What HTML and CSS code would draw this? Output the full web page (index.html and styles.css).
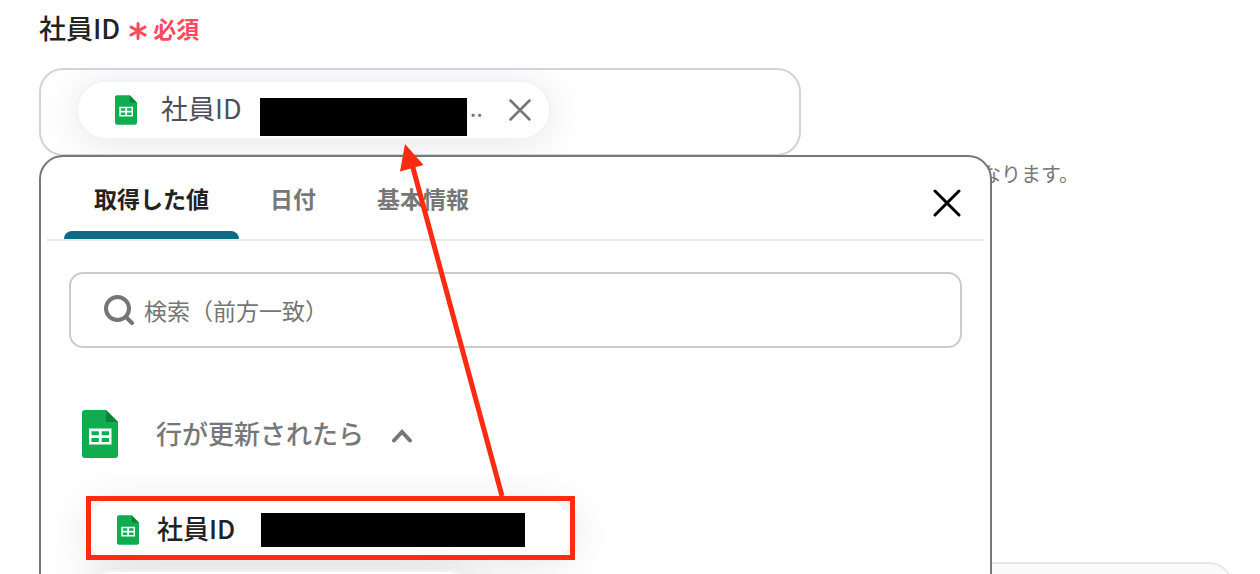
FILE: index.html
```html
<!DOCTYPE html>
<html lang="ja">
<head>
<meta charset="utf-8">
<meta name="viewport" content="width=device-width, initial-scale=1">
<title>社員ID</title>
<link rel="stylesheet" href="styles.css">
</head>
<body>
<svg class="defs" width="0" height="0" aria-hidden="true">
  <symbol id="sheet" viewBox="0 0 36 48">
    <path fill="#0fad4f" d="M3 0h21l12 12v33a3 3 0 0 1-3 3H3a3 3 0 0 1-3-3V3a3 3 0 0 1 3-3z"/>
    <path fill="#098437" d="M24 0l12 12H24z"/>
    <path fill="#fff" fill-rule="evenodd" d="M7 18.500h22.500v16H7zM9.500 21.200v4h7.300v-4zM19.700 21.200v4H27v-4zM9.500 28v4h7.300v-4zM19.700 28v4H27v-4z"/>
  </symbol>
</svg>
<main class="page">
  <section class="field">
    <h2 class="field-title">社員ID
      <span class="required">
        <svg class="asterisk" viewBox="0 0 18 18" aria-hidden="true"><path d="M9 1.500v15M2 5l14 8M16 5L2 13"/></svg>必須
      </span>
    </h2>
    <div class="value-area">
      <div class="value-box">
        <div class="chip">
          <svg class="sheet-small" aria-hidden="true"><use href="#sheet"/></svg>
          <span class="chip-label">社員ID</span>
          <span class="mask"></span>
          <span class="dots">..</span>
          <button class="chip-remove" type="button" aria-label="削除">
            <svg viewBox="0 0 22 22" aria-hidden="true"><path d="M1.500 1.500l19 19M20.500 1.500l-19 19"/></svg>
          </button>
        </div>
      </div>
      <div class="picker">
        <div class="tabs" role="tablist">
          <button class="tab active" type="button" role="tab" aria-selected="true">取得した値</button>
          <button class="tab" type="button" role="tab" aria-selected="false">日付</button>
          <button class="tab" type="button" role="tab" aria-selected="false">基本情報</button>
          <button class="close" type="button" aria-label="閉じる">
            <svg viewBox="0 0 28 28" aria-hidden="true"><path d="M2 2l24 24M26 2L2 26"/></svg>
          </button>
        </div>
        <label class="search">
          <svg viewBox="0 0 30 30" aria-hidden="true"><circle cx="13.500" cy="13.500" r="11.500"/><path d="M22 22l6 6"/></svg>
          <input type="text" placeholder="検索（前方一致）" aria-label="検索（前方一致）">
        </label>
        <button class="group" type="button" aria-expanded="true">
          <svg class="sheet-large" aria-hidden="true"><use href="#sheet"/></svg>
          <span class="group-label">行が更新されたら</span>
          <svg class="chevron" viewBox="0 0 20 14" aria-hidden="true"><path d="M2 11.500l8-8.500 8 8.500"/></svg>
        </button>
        <div class="options">
          <button class="option" type="button">
            <svg class="sheet-small" aria-hidden="true"><use href="#sheet"/></svg>
            <span class="option-label">社員ID</span>
            <span class="option-mask"></span>
          </button>
          <button class="option next" type="button" aria-label="次の項目"></button>
        </div>
      </div>
    </div>
    <p class="hint">なります。</p>
  </section>
  <section class="card"></section>
  <div class="highlight"></div>
  <svg class="arrow" viewBox="0 0 106 352" aria-hidden="true">
    <path class="shaft" d="M12.500 22L102 352"/>
    <path class="head" d="M5 0L23.500 21L0 27.500z"/>
  </svg>
</main>
</body>
</html>
```
FILE: styles.css
```css
* { box-sizing: border-box; }
body {
  margin: 0;
  background: #fff;
  color: #222;
  font-family: "Noto Sans CJK JP", "Noto Sans", sans-serif;
}
button {
  margin: 0;
  padding: 0;
  border: 0;
  background: none;
  color: inherit;
  font: inherit;
  cursor: pointer;
}
svg { display: block; flex: none; }
path, circle { stroke-linecap: round; }
.defs { position: absolute; }
.page {
  position: relative;
  height: 100vh;
  overflow: hidden;
}
.field { padding: 8px 39px 0; }
.field-title {
  display: flex;
  align-items: center;
  gap: 9px;
  margin: 0 0 20px;
  font-size: 27px;
  font-weight: 500;
  line-height: 40px;
}
.required {
  display: flex;
  align-items: center;
  gap: 6px;
  color: #ff4a5d;
  font-size: 23px;
  font-weight: 700;
  line-height: 36px;
}
.asterisk {
  width: 18px;
  height: 18px;
  margin-top: 6px;
  fill: none;
  stroke: currentColor;
  stroke-width: 3;
}
.value-area { position: relative; }
.value-box {
  max-width: 762px;
  padding: 10px 35px 14px;
  border: 2px solid #cfd4da;
  border-radius: 24px;
  overflow: hidden;
}
.chip {
  display: flex;
  align-items: center;
  width: 475px;
  height: 60px;
  padding: 0 18px 0 37px;
  border: 2px solid #f3f3f3;
  border-radius: 30px;
  background: #fff;
  box-shadow: 0 4px 44px rgba(0, 0, 0, .1);
}
.sheet-small { width: 22px; height: 30px; }
.chip-label {
  margin-left: 24px;
  padding-bottom: 4px;
  color: #4b515b;
  font-size: 27px;
  line-height: 40px;
}
.mask {
  align-self: flex-end;
  width: 207px;
  height: 38px;
  margin: 0 3px 2px auto;
  background: #000;
}
.dots {
  padding-bottom: 6px;
  color: #757575;
  font-size: 24px;
  line-height: 32px;
}
.chip-remove { margin-left: 26px; }
.chip-remove svg {
  width: 22px;
  height: 22px;
  fill: none;
  stroke: #757575;
  stroke-width: 2.5;
}
.picker {
  position: absolute;
  z-index: 1;
  top: 87px;
  left: 0;
  width: 953px;
  height: 100vh;
  border: 2px solid #777;
  border-radius: 24px;
  background: #fff;
  overflow: hidden;
}
.tabs {
  display: flex;
  align-items: stretch;
  gap: 1px;
  height: 84px;
  margin: 0 6px;
  padding-left: 17px;
  border-bottom: 2px solid #e6e6e6;
}
.tab {
  position: relative;
  padding: 0 30px;
  color: #777;
  font-size: 23px;
  font-weight: 700;
  line-height: 34px;
}
.tab.active { color: #222; }
.tab.active::after {
  content: "";
  position: absolute;
  right: 0;
  bottom: 0;
  left: 0;
  height: 8px;
  border-radius: 8px 8px 0 0;
  background: #0c6b84;
}
.close { margin: 10px 23px 0 auto; }
.close svg {
  width: 28px;
  height: 28px;
  fill: none;
  stroke: #000;
  stroke-width: 3;
}
.search {
  display: flex;
  align-items: center;
  gap: 10px;
  height: 76px;
  margin: 31px 28px 0;
  padding: 0 33px;
  border: 2px solid #ccc;
  border-radius: 14px;
  color: #757575;
}
.search svg {
  width: 30px;
  height: 30px;
  fill: none;
  stroke: currentColor;
  stroke-width: 4;
}
.search input {
  flex: 1;
  min-width: 0;
  padding: 0;
  border: 0;
  outline: 0;
  background: none;
  color: #222;
  font-family: inherit;
  font-size: 23px;
  line-height: 34px;
}
.search input::placeholder { color: #757575; opacity: 1; }
.group {
  display: flex;
  align-items: center;
  margin: 62px 0 0 41px;
  color: #777;
  font-size: 26px;
  font-weight: 500;
  line-height: 40px;
}
.group-label { padding-bottom: 2px; }
.sheet-large { width: 36px; height: 48px; margin-right: 38px; }
.chevron {
  width: 20px;
  height: 14px;
  margin: 4px 0 0 28px;
  fill: none;
  stroke: currentColor;
  stroke-width: 4;
}
.options {
  display: flex;
  flex-direction: column;
  align-items: flex-start;
  gap: 9px;
  margin: 41px 0 0 41px;
}
.option {
  display: flex;
  align-items: center;
  width: 495px;
  height: 62px;
  padding: 0 33px;
  border: 2px solid #f3f3f3;
  border-radius: 31px;
  background: #fff;
  box-shadow: 0 4px 44px rgba(0, 0, 0, .1);
}
.option-label {
  margin: 0 26px 0 18px;
  padding-bottom: 4px;
  font-size: 26px;
  font-weight: 500;
  line-height: 40px;
}
.option-mask {
  width: 264px;
  height: 34px;
  background: #000;
}
.option.next { width: 396px; }
.hint {
  margin: 0;
  padding: 3px 0 0 942px;
  color: #777;
  font-size: 20px;
  line-height: 30px;
  white-space: nowrap;
}
.card {
  height: 200px;
  margin: 373px 27px 0 39px;
  border: 2px solid #e8e8e8;
  border-radius: 24px;
  background: #fafafa;
}
.highlight {
  position: absolute;
  z-index: 2;
  top: 496px;
  left: 86px;
  width: 489px;
  height: 64px;
  border: 5px solid #ff2a12;
}
.arrow {
  position: absolute;
  z-index: 2;
  top: 144px;
  left: 400px;
  width: 106px;
  height: 352px;
}
.shaft {
  fill: none;
  stroke: #ff2a12;
  stroke-width: 5;
  stroke-linecap: butt;
}
.head { fill: #ff2a12; }
```
